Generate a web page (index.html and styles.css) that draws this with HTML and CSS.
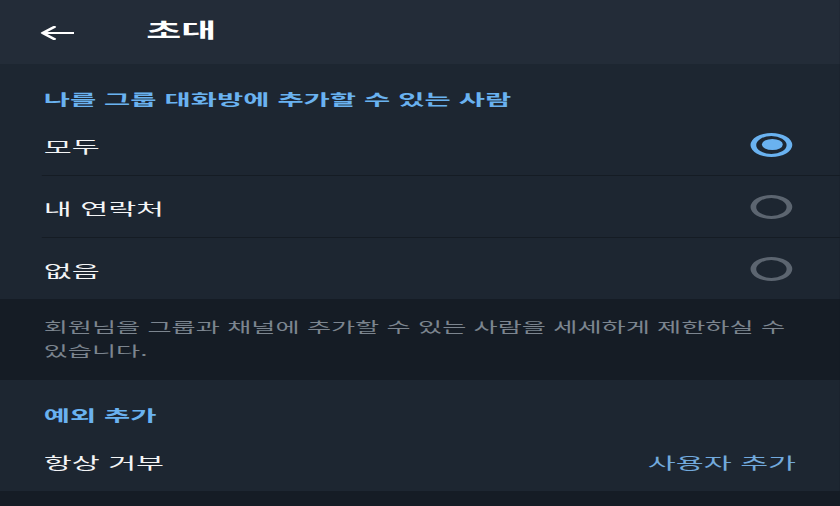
FILE: index.html
```html
<!DOCTYPE html>
<html lang="ko">
<head>
    <meta charset="UTF-8">
    <meta name="viewport" content="width=device-width, initial-scale=1.0">
    <title>초대</title>
    <link rel="stylesheet" href="styles.css">
</head>
<body>
    <div class="screen">
        <header class="topbar">
            <svg class="back" width="18" height="14" viewBox="0 0 18 14">
                <path d="M1.5 7H17.5M7.5 1L1.5 7L7.5 13" fill="none" stroke="#ffffff" stroke-width="2" stroke-linecap="round" stroke-linejoin="round"/>
            </svg>
            <h1 class="title">초대</h1>
        </header>

        <section class="panel">
            <div class="panel-title">나를 그룹 대화방에 추가할 수 있는 사람</div>
            <div class="row">
                <span>모두</span>
                <span class="radio checked"></span>
            </div>
            <div class="row">
                <span>내 연락처</span>
                <span class="radio"></span>
            </div>
            <div class="row last">
                <span>없음</span>
                <span class="radio"></span>
            </div>
        </section>

        <p class="hint">회원님을 그룹과 채널에 추가할 수 있는 사람을 세세하게 제한하실 수 있습니다.</p>

        <section class="panel">
            <div class="panel-title">예외 추가</div>
            <div class="row last">
                <span>항상 거부</span>
                <span class="link">사용자 추가</span>
            </div>
        </section>
    </div>
</body>
</html>
```

FILE: styles.css
```css
html, body {
    margin: 0;
    height: 100%;
    background-color: #151c25;
    overflow: hidden;
}
body {
    font-family: "Noto Sans CJK KR", "Noto Sans", sans-serif;
    color: #f4f5f6;
}
/* the capture is a phone screen stretched sideways */
.screen {
    width: 442px;
    transform: scaleX(1.9);
    transform-origin: 0 0;
}
.topbar {
    display: flex;
    align-items: center;
    height: 64px;
    padding-left: 21px;
    background-color: #232c38;
}
.back {
    margin-top: 2px;
    margin-right: 38px;
}
.title {
    margin: 0 0 5px 0;
    font-size: 20px;
    font-weight: 700;
    line-height: 24px;
    color: #ffffff;
}
.panel {
    background-color: #1d2631;
}
.panel-title {
    padding: 25px 23px 5px 23px;
    font-size: 15px;
    font-weight: 700;
    line-height: 20px;
    color: #6ab2f0;
}
.row {
    display: flex;
    align-items: center;
    justify-content: space-between;
    height: 61px;
    margin-left: 22px;
    padding: 0 25px 0 1px;
    border-bottom: 1px solid #151c24;
    font-size: 16px;
}
.row.last {
    border-bottom: none;
}
.row span {
    padding-top: 2px;
}
.row .radio {
    display: flex;
    align-items: center;
    justify-content: center;
    width: 22px;
    height: 24px;
    padding: 0;
    box-sizing: border-box;
    border: 3px solid #5c6570;
    border-radius: 50%;
}
.row .radio.checked {
    border-color: #6ab2f0;
}
.radio.checked::after {
    content: "";
    width: 11px;
    height: 11px;
    border-radius: 50%;
    background-color: #6ab2f0;
}
.link {
    margin-right: -2px;
    color: #72a9dc;
}
.hint {
    margin: 0;
    padding: 15px 20px 18px 23px;
    font-size: 13.8px;
    line-height: 24px;
    word-break: keep-all;
    color: #7c858f;
    background-color: #151c25;
}
```
